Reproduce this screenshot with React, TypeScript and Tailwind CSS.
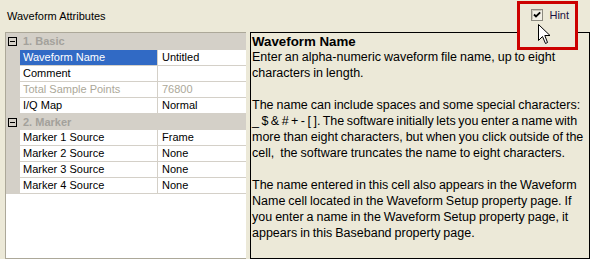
import React from "react";

type Row =
  | { kind: "cat"; label: string; h: string }
  | { kind: "item"; name: string; value: string; selected?: boolean; disabled?: boolean };

const ROWS: Row[] = [
  { kind: "cat", label: "1. Basic", h: "h-[17px]" },
  { kind: "item", name: "Waveform Name", value: "Untitled", selected: true },
  { kind: "item", name: "Comment", value: "" },
  { kind: "item", name: "Total Sample Points", value: "76800", disabled: true },
  { kind: "item", name: "I/Q Map", value: "Normal" },
  { kind: "cat", label: "2. Marker", h: "h-[16px]" },
  { kind: "item", name: "Marker 1 Source", value: "Frame" },
  { kind: "item", name: "Marker 2 Source", value: "None" },
  { kind: "item", name: "Marker 3 Source", value: "None" },
  { kind: "item", name: "Marker 4 Source", value: "None" },
];

// tight: line with many spaces, squeezed a bit more so it fits like the original
const HELP_LINES: { text: string; tight?: boolean }[] = [
  { text: "Enter an alpha-numeric waveform file name, up to eight" },
  { text: "characters in length." },
  { text: "" },
  { text: "The name can include spaces and some special characters:" },
  { text: "_ $ & # + - [ ]. The software initially lets you enter a name with", tight: true },
  { text: "more than eight characters, but when you click outside of the" },
  { text: "cell,  the software truncates the name to eight characters." },
  { text: "" },
  { text: "The name entered in this cell also appears in the Waveform" },
  { text: "Name cell located in the Waveform Setup property page. If" },
  { text: "you enter a name in the Waveform Setup property page, it" },
  { text: "appears in this Baseband property page." },
];

function MinusBox() {
  return (
    <svg width="9" height="9" viewBox="0 0 9 9" className="shrink-0">
      <rect x="0.5" y="0.5" width="8" height="8" fill="none" stroke="#000" />
      <path d="M2 4.5H7" stroke="#000" />
    </svg>
  );
}

function CheckBox() {
  return (
    <svg width="12" height="12" viewBox="0 0 12 12" className="shrink-0">
      <rect x="0.5" y="0.5" width="11" height="11" fill="#f1efe6" stroke="#8c8a80" />
      <path d="M1.5 1.5H10.5M1.5 1.5V10.5" stroke="#c9c6ba" />
      <path d="M3 5.5L5 7.5L9.2 3.3" fill="none" stroke="#000" strokeWidth="1.8" />
    </svg>
  );
}

function Cursor() {
  return (
    <svg width="13" height="21" viewBox="0 0 13 21">
      <path
        d="M0.5 0.5V16.5L4.5 12.5L7.5 19.5L9.5 18.5L6.8 11.5H12L0.5 0.5Z"
        fill="#fff"
        stroke="#000"
        strokeLinejoin="miter"
      />
    </svg>
  );
}

function PropertyGrid() {
  return (
    <div className="ml-[5px] w-[241px] h-[227px] bg-white border-l border-t border-b border-[#ACA899] flex flex-col text-[11px] leading-[15px]">
      {ROWS.map((r, i) =>
        r.kind === "cat" ? (
          <div key={i} className={`${r.h} bg-[#D4D0C8] flex items-center pl-[2px] gap-[6px]`}>
            <MinusBox />
            <span className="font-bold text-[#A3A19B]">{r.label}</span>
          </div>
        ) : (
          <div key={i} className="flex h-[16px]">
            <div className="w-[14px] bg-[#D4D0C8]" />
            <div
              className={`w-[138px] h-[16px] border-b border-r border-[#D4D0C8] pl-[3px] whitespace-nowrap ${
                r.selected ? "bg-[#316AC5] text-white" : r.disabled ? "text-[#ACA899]" : "text-black"
              }`}
            >
              {r.name}
            </div>
            <div
              className={`flex-1 h-[16px] border-b border-[#D4D0C8] pl-[4px] whitespace-nowrap ${
                r.disabled ? "text-[#ACA899]" : "text-black"
              }`}
            >
              {r.value}
            </div>
          </div>
        )
      )}
    </div>
  );
}

function HelpPanel() {
  return (
    <div className="ml-[4px] w-[340px] h-[227px] border border-black pl-[1px] pt-[1px] text-black overflow-hidden">
      <div className="font-bold text-[13.3px] leading-[15px] whitespace-nowrap">Waveform Name</div>
      <div className="text-[12.5px] leading-[16px] [word-spacing:-0.5px]">
        {HELP_LINES.map((l, i) => (
          <div key={i} className={`h-[16px] whitespace-pre ${l.tight ? "[word-spacing:-1px]" : ""}`}>
            {l.text}
          </div>
        ))}
      </div>
    </div>
  );
}

export default function App() {
  return (
    <div className="relative w-[590px] h-[259px] bg-[#ECE9D8] overflow-hidden flex flex-col font-['Liberation_Sans',Arial,sans-serif] text-black">
      <div className="h-[32px] flex items-start justify-between">
        <div className="pl-[7px] pt-[9px] text-[11px] leading-[15px]">Waveform Attributes</div>
        <label className="relative z-20 mt-[9px] mr-[21px] flex items-center gap-[6px] text-[11px] leading-[12px] text-[#1a1040]">
          <CheckBox />
          <span>Hint</span>
        </label>
      </div>
      <div className="flex">
        <PropertyGrid />
        <HelpPanel />
      </div>

      {/* annotation box round the Hint checkbox */}
      <div className="absolute left-[517px] top-[1px] w-[61px] h-[49px] border-[3px] border-[#CC0000] bg-[#ECE9D8] z-10" />
      <div className="absolute left-[538px] top-[24px] z-30">
        <Cursor />
      </div>
    </div>
  );
}
